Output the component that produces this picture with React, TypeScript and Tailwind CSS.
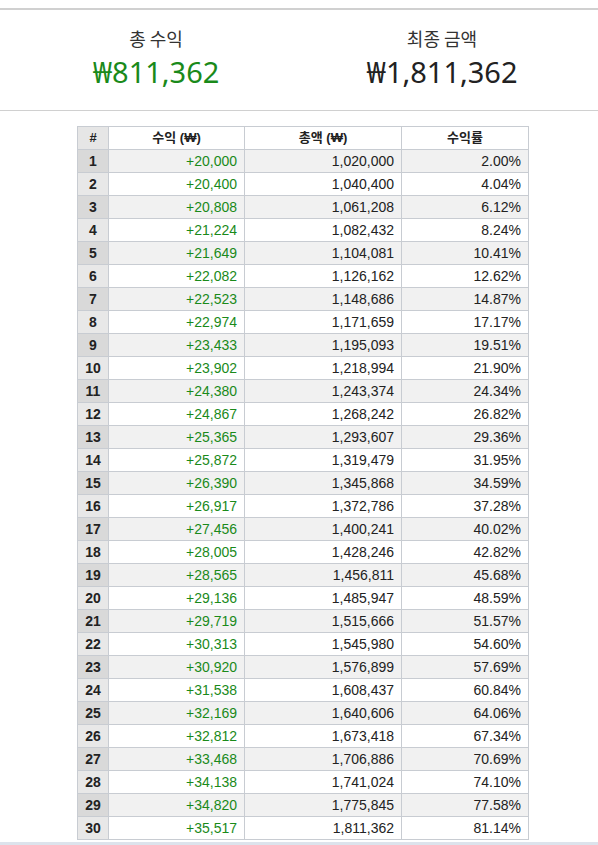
import React from 'react';

const principal = 1000000;

const gains = [
  20000, 20400, 20808, 21224, 21649, 22082, 22523, 22974, 23433, 23902,
  24380, 24867, 25365, 25872, 26390, 26917, 27456, 28005, 28565, 29136,
  29719, 30313, 30920, 31538, 32169, 32812, 33468, 34138, 34820, 35517,
];

const rows = gains.map((gain, i) => {
  const total = Math.round(principal * Math.pow(1.02, i + 1));
  return {
    n: i + 1,
    gain,
    total,
    pct: ((total - principal) / principal) * 100,
  };
});

const fmt = (v: number) => v.toLocaleString('en-US');

const App: React.FC = () => {
  const finalTotal = rows[rows.length - 1].total;
  return (
    <div className="w-[598px] h-[845px] bg-white relative overflow-hidden font-['Liberation_Sans',sans-serif]">
      <div className="mt-2 border-t-2 border-b border-[#d0d0d0] px-[13px] pt-[14px] pb-[19px] flex">
        <div className="flex-1 flex flex-col items-center">
          <div className="text-[18px] leading-[28px] text-[#333] font-['Noto_Sans_CJK_KR',sans-serif]">총 수익</div>
          <div className="text-[29px] leading-[39px] text-[#1a8a1a] font-['Noto_Sans','Noto_Sans_CJK_KR',sans-serif]">₩{fmt(finalTotal - principal)}</div>
        </div>
        <div className="flex-1 flex flex-col items-center">
          <div className="text-[18px] leading-[28px] text-[#333] font-['Noto_Sans_CJK_KR',sans-serif]">최종 금액</div>
          <div className="text-[29px] leading-[39px] text-[#222] font-['Noto_Sans','Noto_Sans_CJK_KR',sans-serif]">₩{fmt(finalTotal)}</div>
        </div>
      </div>

      <table className="ml-[77px] mt-[15px] border-collapse text-[14px] text-[#222] table-fixed w-[451px]">
        <colgroup>
          <col className="w-[31px]" />
          <col className="w-[136px]" />
          <col className="w-[157px]" />
          <col className="w-[127px]" />
        </colgroup>
        <thead>
          <tr className="h-[23px] text-[13px]">
            <th className="border border-[#c8ccd2] bg-[#e6e6e6] font-bold text-center">#</th>
            <th className="border border-[#c8ccd2] bg-white font-bold text-center font-['Liberation_Sans','Noto_Sans_CJK_KR',sans-serif]">수익 (₩)</th>
            <th className="border border-[#c8ccd2] bg-white font-bold text-center font-['Liberation_Sans','Noto_Sans_CJK_KR',sans-serif]">총액 (₩)</th>
            <th className="border border-[#c8ccd2] bg-white font-bold text-center font-['Liberation_Sans','Noto_Sans_CJK_KR',sans-serif]">수익률</th>
          </tr>
        </thead>
        <tbody>
          {rows.map((r) => {
            const odd = r.n % 2 === 1;
            return (
              <tr key={r.n} className={`h-[23px] leading-[20px] ${odd ? 'bg-[#f1f1f1]' : 'bg-white'}`}>
                <td className={`border border-[#c8ccd2] text-center font-bold ${odd ? 'bg-[#d9d9d9]' : 'bg-[#e8e8e8]'}`}>{r.n}</td>
                <td className="border border-[#c8ccd2] text-right pr-[7px] text-[#1a8a1a]">+{fmt(r.gain)}</td>
                <td className="border border-[#c8ccd2] text-right pr-[7px]">{fmt(r.total)}</td>
                <td className="border border-[#c8ccd2] text-right pr-[7px]">{r.pct.toFixed(2)}%</td>
              </tr>
            );
          })}
        </tbody>
      </table>

      <div className="absolute left-0 right-0 bottom-0 h-[3px] bg-[#dde3ec]" />
    </div>
  );
};

export default App;
